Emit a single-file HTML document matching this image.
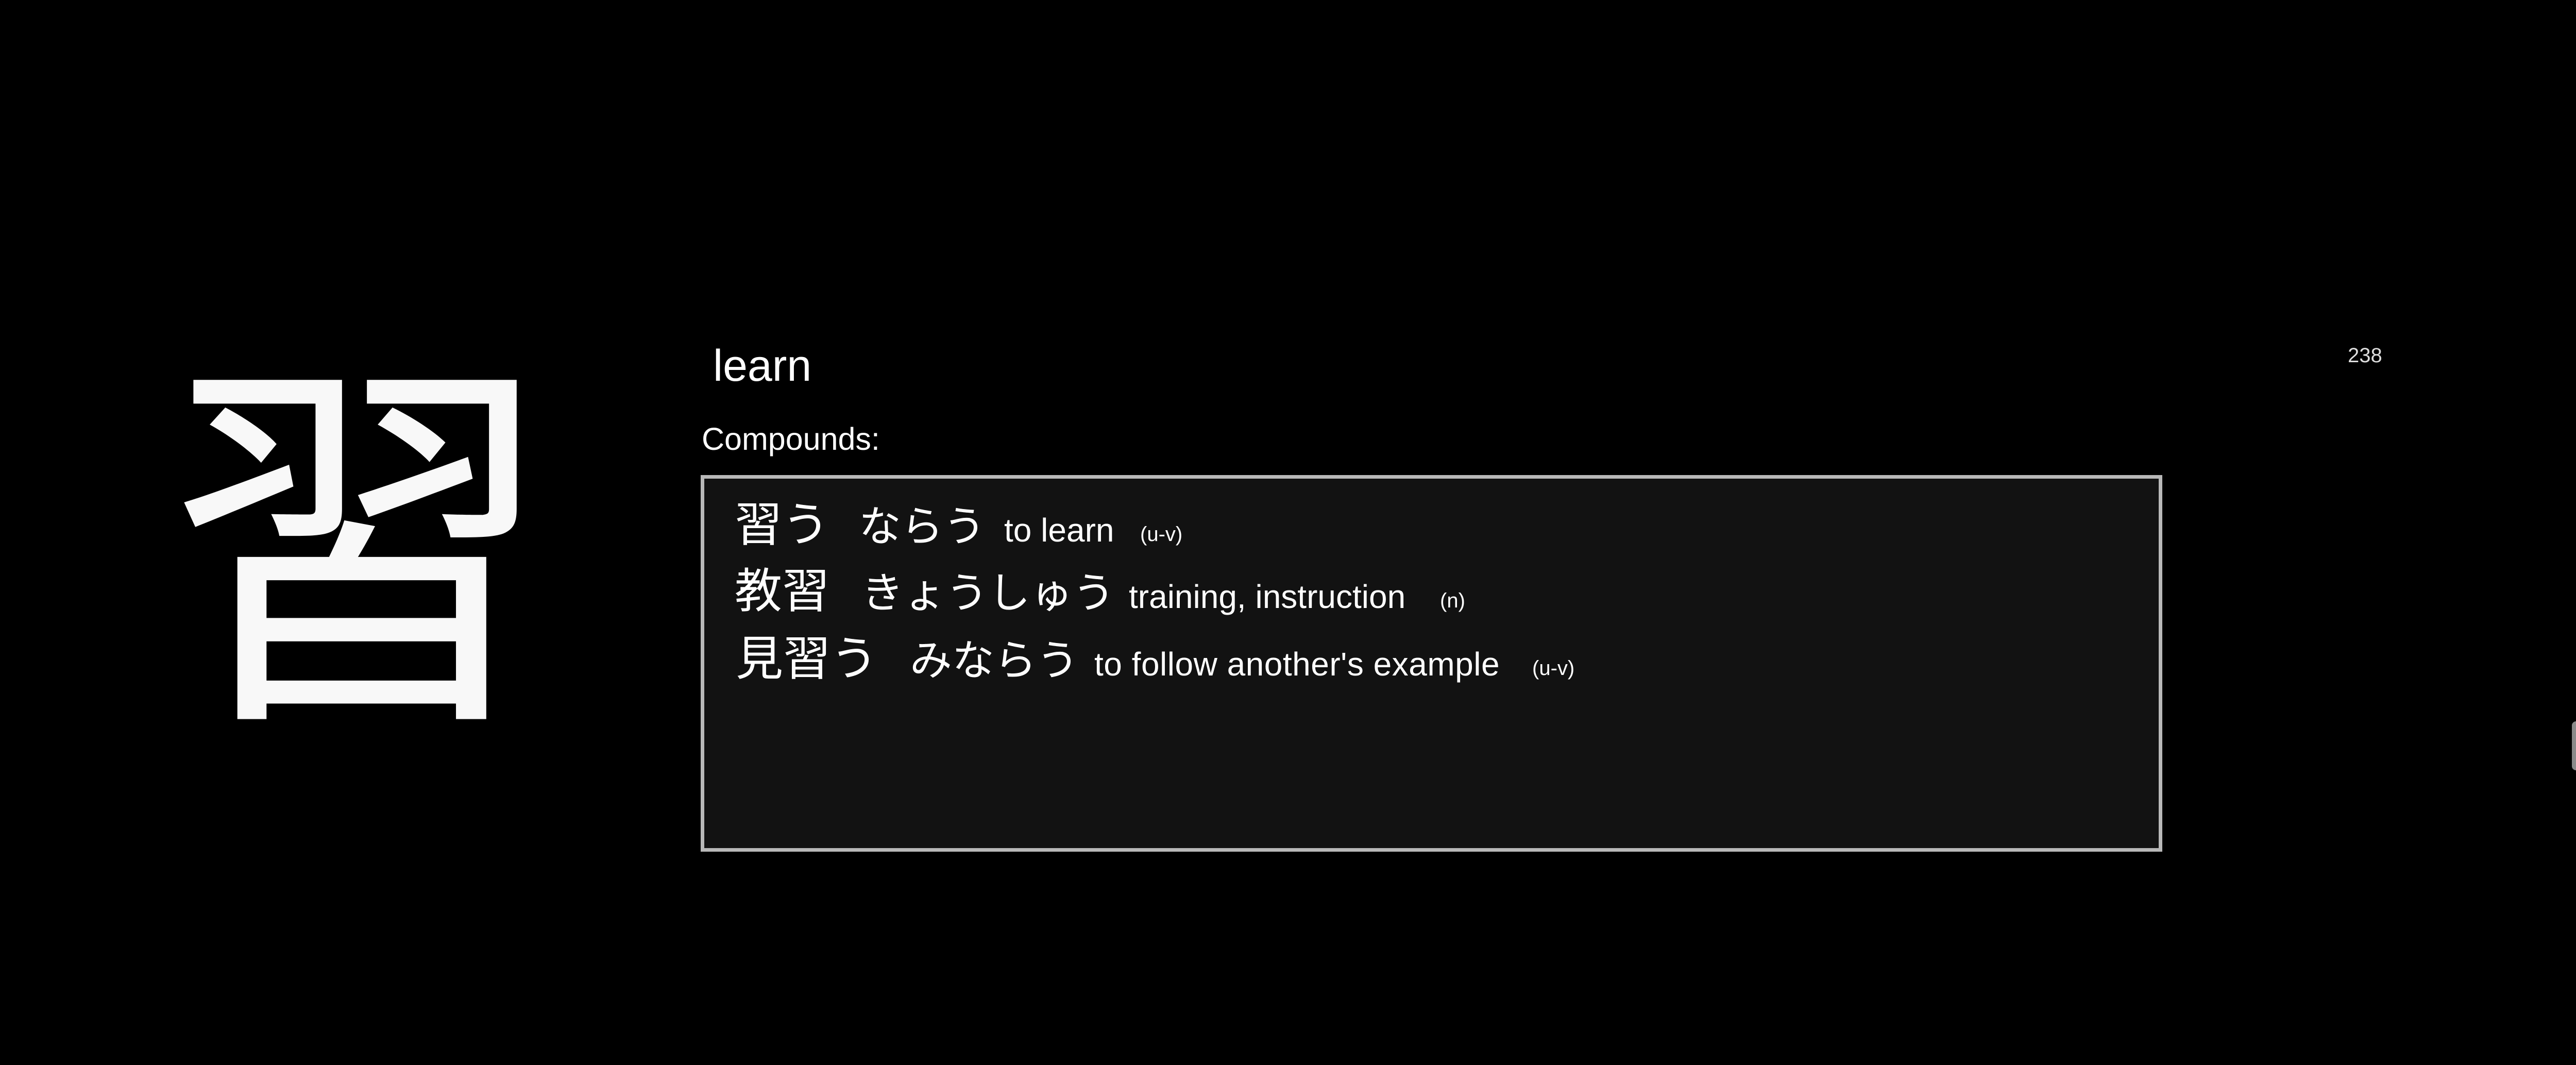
<!DOCTYPE html>
<html><head><meta charset="utf-8"><style>
html,body{margin:0;padding:0;background:#000;width:5008px;height:2067px;overflow:hidden;position:relative}
.a{position:absolute;white-space:nowrap;line-height:1;color:#fff}
.L{font-family:"Liberation Sans",sans-serif}
.J{font-family:"Noto Sans CJK JP",sans-serif}
#box{position:absolute;left:1360px;top:922px;width:2823px;height:717px;border:7px solid #b8b8b8;background:#121212}
</style></head><body>
<div class="a J" style="left:321px;top:627px;font-size:755px;color:#f8f8f8">習</div>
<div class="a L" style="left:1384px;top:667px;font-size:86px">learn</div>
<div class="a L" style="left:1362px;top:822px;font-size:61px">Compounds:</div>
<div class="a L" style="left:4557px;top:670px;font-size:40px;color:#ddd">238</div>
<div id="box"></div>
<div class="a J" style="left:1426px;top:965px;font-size:92px">習う</div>
<div class="a J" style="left:1667px;top:974px;font-size:82px">ならう</div>
<div class="a L" style="left:1949px;top:997px;font-size:64px">to learn</div>
<div class="a L" style="left:2213px;top:1017px;font-size:40px">(u-v)</div>
<div class="a J" style="left:1426px;top:1094px;font-size:92px">教習</div>
<div class="a J" style="left:1672px;top:1103px;font-size:82px">きょうしゅう</div>
<div class="a L" style="left:2191px;top:1126px;font-size:64px">training, instruction</div>
<div class="a L" style="left:2795px;top:1146px;font-size:40px">(n)</div>
<div class="a J" style="left:1428px;top:1225px;font-size:92px">見習う</div>
<div class="a J" style="left:1766px;top:1234px;font-size:82px">みならう</div>
<div class="a L" style="left:2124px;top:1257px;font-size:64px;letter-spacing:0.5px">to follow another's example</div>
<div class="a L" style="left:2974px;top:1277px;font-size:40px">(u-v)</div>
<div style="position:absolute;left:4992px;top:1400px;width:20px;height:95px;border-radius:8px;background:#8a8a8a"></div>
</body></html>
